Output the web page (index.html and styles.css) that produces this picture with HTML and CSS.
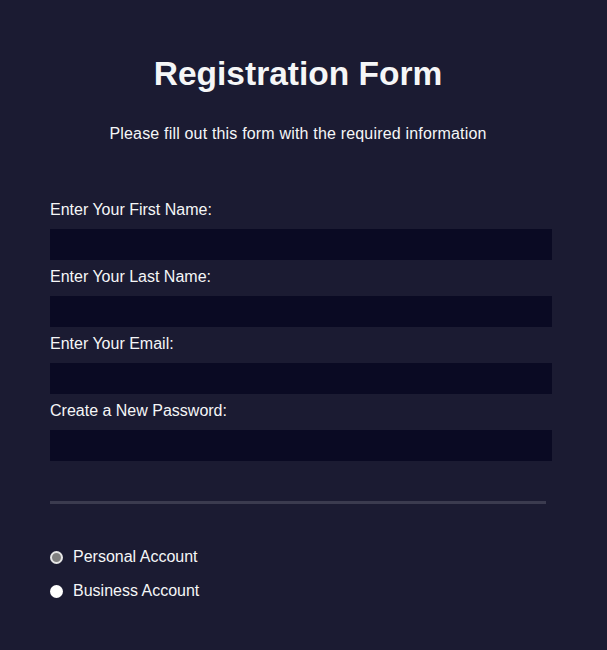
FILE: index.html
```html
<!DOCTYPE html>
<html lang="en">
<head>
<meta charset="UTF-8">
<title>Registration Form</title>
<link rel="stylesheet" href="styles.css">
</head>
<body>
<div class="page">
  <h1 class="title">Registration Form</h1>
  <p class="intro">Please fill out this form with the required information</p>
  <form class="form">
    <fieldset class="group">
      <label class="field">Enter Your First Name: <input class="text-input" type="text"></label>
      <label class="field">Enter Your Last Name: <input class="text-input" type="text"></label>
      <label class="field">Enter Your Email: <input class="text-input" type="email"></label>
      <label class="field">Create a New Password: <input class="text-input" type="password"></label>
    </fieldset>
    <fieldset class="group group-last">
      <label class="field radio-field"><input class="radio" type="radio" name="account" checked> Personal Account</label>
      <label class="field radio-field"><input class="radio" type="radio" name="account"> Business Account</label>
    </fieldset>
  </form>
</div>
</body>
</html>
```
FILE: styles.css
```css
html, body {
  margin: 0;
  padding: 0;
  background: #1b1b32;
}
body {
  color: #f5f6f7;
  font-family: "Liberation Sans", Arial, sans-serif;
  font-size: 16px;
}
.page {
  width: 596px;
  padding-top: 35px;
}
.title {
  font-size: 33.5px;
  font-weight: bold;
  text-align: center;
  margin: 20px auto 32px;
}
.intro {
  text-align: center;
  margin: 16px auto 18px;
  letter-spacing: 0.18px;
}
.form {
  width: 500px;
  margin: 0 auto;
  padding-bottom: 32px;
}
.group {
  border: none;
  min-width: 0;
  margin: 0 2px;
  padding: 32px 0;
  border-bottom: 3px solid #3b3b4f;
}
.group-last {
  border-bottom: none;
}
.field {
  display: block;
  margin: 8px 0;
}
.text-input {
  display: block;
  box-sizing: border-box;
  width: 502px;
  height: 31px;
  margin: 10px 0 0 0;
  padding: 1px 2px;
  background: #0a0a23;
  border: 1px solid #0a0a23;
  color: #ffffff;
}
.radio-field {
  display: flex;
  align-items: center;
  gap: 10px;
  height: 26px;
}
.radio {
  appearance: none;
  -webkit-appearance: none;
  width: 13px;
  height: 13px;
  margin: 0;
  border-radius: 50%;
  background: #ffffff;
  box-sizing: border-box;
}
.radio:checked {
  background: #808080;
  border: 2px solid #e6e6e6;
}
```
